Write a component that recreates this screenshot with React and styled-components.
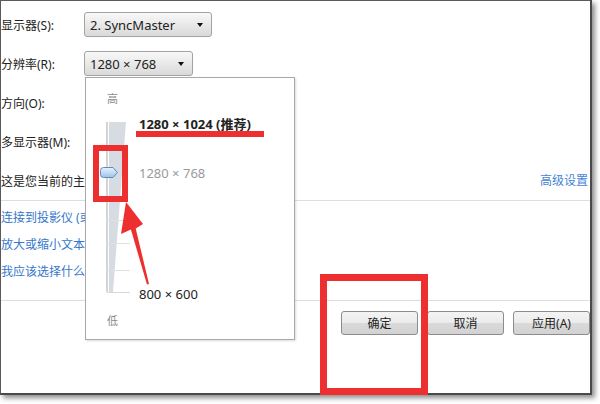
import React from 'react';
import styled, { createGlobalStyle } from 'styled-components';

const Global = createGlobalStyle`
  html, body { margin: 0; padding: 0; background: #fff; }
  body { font-family: "Noto Sans", "Noto Sans CJK SC", sans-serif; }
  * { box-sizing: border-box; }
`;

const Stage = styled.div`
  position: relative;
  width: 600px;
  height: 404px;
  overflow: hidden;
  background: #fff;
`;

const Window = styled.div`
  position: relative;
  width: 592px;
  height: 395px;
  border: 1px solid #5a5a5a;
  border-right: 2px solid #4a4a4a;
  border-bottom: 2px solid #4a4a4a;
  background: #fff;
  box-shadow: 3px 3px 5px rgba(0, 0, 0, 0.45);
  display: flex;
  flex-direction: column;
  color: #222;
`;

const Form = styled.div`
  padding-top: 4px;
  border-bottom: 1px solid #dedede;
  display: flex;
  flex-direction: column;
`;

const Row = styled.div`
  height: 39px;
  display: flex;
  align-items: center;
`;

const Label = styled.div`
  width: 83px;
  flex: none;
  font-size: 12px;
  white-space: nowrap;
  color: #222;
`;

const Note = styled.div`
  flex: 1;
  font-size: 12px;
  white-space: nowrap;
  overflow: hidden;
  color: #222;
`;

const Link = styled.a`
  display: block;
  font-size: 12px;
  line-height: 27px;
  color: #3577cc;
  white-space: nowrap;
  text-decoration: none;
`;

const RightLink = styled(Link)`
  flex: none;
  margin-right: 2px;
  line-height: 16px;
  color: #4385d6;
`;

const Dropdown = styled.div`
  width: ${(p) => p.$w}px;
  height: 25px;
  display: flex;
  align-items: center;
  justify-content: space-between;
  padding: 0 8px 0 5px;
  border: 1px solid #a3a3a3;
  border-radius: 3px;
  background: linear-gradient(#f8f8f8, #e9e9e9 50%, #d9d9d9);
  font-size: 13px;
  color: #222;
  &::after {
    content: "";
    width: 0;
    height: 0;
    border-left: 3.5px solid transparent;
    border-right: 3.5px solid transparent;
    border-top: 4px solid #111;
  }
`;

const Links = styled.div`
  padding: 3px 0 15px 0;
  border-bottom: 1px solid #dedede;
  overflow: hidden;
`;

const ButtonBar = styled.div`
  padding-top: 10px;
  display: flex;
  justify-content: flex-end;
  gap: 9px;
`;

const Button = styled.button`
  width: 77px;
  height: 24px;
  border: 1px solid #8c8c8c;
  border-radius: 3px;
  background: linear-gradient(#f4f4f4, #ebebeb 50%, #dadada 51%, #d2d2d2);
  font-family: "Noto Sans", "Noto Sans CJK SC", sans-serif;
  font-size: 12px;
  color: #222;
  padding: 0;
`;

const Popup = styled.div`
  position: absolute;
  left: 84px;
  top: 76px;
  width: 210px;
  height: 263px;
  border: 1px solid #a8a8a8;
  background: #fff;
  box-shadow: 1px 1px 2px rgba(0, 0, 0, 0.15);
  padding: 14px 0 0 13px;
  display: flex;
`;

const SliderCol = styled.div`
  width: 40px;
  flex: none;
  display: flex;
  flex-direction: column;
`;

const EndLabel = styled.div`
  padding-left: 8px;
  margin-top: ${(p) => p.$mt || 0}px;
  font-size: 11px;
  line-height: 14px;
  color: #8a8a8a;
`;

const Track = styled.svg`
  display: block;
  margin-top: 10px;
`;

const LabelCol = styled.div`
  display: flex;
  flex-direction: column;
`;

const Res = styled.div`
  margin-top: ${(p) => p.$mt}px;
  font-size: 13px;
  line-height: 16px;
  white-space: nowrap;
  font-weight: ${(p) => (p.$bold ? 700 : 400)};
  color: ${(p) => p.$color || '#222'};
`;

const Marks = styled.svg`
  position: absolute;
  left: 0;
  top: 0;
  pointer-events: none;
`;

function Slider() {
  return (
    <Track width="40" height="180" viewBox="0 0 40 180">
      <defs>
        <linearGradient id="thumb" x1="0" y1="0" x2="0" y2="1">
          <stop offset="0" stopColor="#e6f1fc" />
          <stop offset="0.5" stopColor="#c4dcf4" />
          <stop offset="1" stopColor="#9cc2e8" />
        </linearGradient>
      </defs>
      <polygon points="10,6 27,6 14,176 10,176" fill="#d7dce2" />
      <line x1="8" y1="6" x2="8" y2="176" stroke="#a9a9a9" strokeWidth="1" />
      <line x1="8" y1="104.5" x2="31" y2="104.5" stroke="#e0e0e0" />
      <line x1="8" y1="127.5" x2="31" y2="127.5" stroke="#e0e0e0" />
      <line x1="8" y1="154.5" x2="31" y2="154.5" stroke="#e0e0e0" />
      <line x1="8" y1="176.5" x2="31" y2="176.5" stroke="#d8d8d8" />
      <path
        d="M4.5,51.5 H14 L18.5,56.5 L14,61.5 H4.5 Q1.5,61.5 1.5,58.5 V54.5 Q1.5,51.5 4.5,51.5 Z"
        fill="url(#thumb)"
        stroke="#5d8cbf"
        strokeWidth="1"
      />
    </Track>
  );
}

export default function App() {
  return (
    <Stage>
      <Global />
      <Window>
        <Form>
          <Row>
            <Label>显示器(S):</Label>
            <Dropdown $w={128}>2. SyncMaster</Dropdown>
          </Row>
          <Row>
            <Label>分辨率(R):</Label>
            <Dropdown $w={109}>1280 × 768</Dropdown>
          </Row>
          <Row>
            <Label>方向(O):</Label>
          </Row>
          <Row>
            <Label>多显示器(M):</Label>
          </Row>
          <Row>
            <Note>这是您当前的主显示器。</Note>
            <RightLink>高级设置</RightLink>
          </Row>
        </Form>
        <Links>
          <Link>连接到投影仪 (或按 Windows 徽标键 + P)</Link>
          <Link>放大或缩小文本和其他项目</Link>
          <Link>我应该选择什么显示器设置?</Link>
        </Links>
        <ButtonBar>
          <Button>确定</Button>
          <Button>取消</Button>
          <Button>应用(A)</Button>
        </ButtonBar>
        <Popup>
          <SliderCol>
            <EndLabel>高</EndLabel>
            <Slider />
            <EndLabel $mt={18}>低</EndLabel>
          </SliderCol>
          <LabelCol>
            <Res $mt={24} $bold>1280 × 1024 (推荐)</Res>
            <Res $mt={33} $color="#9a9a9a">1280 × 768</Res>
            <Res $mt={105}>800 × 600</Res>
          </LabelCol>
        </Popup>
      </Window>
      <Marks width="600" height="404" viewBox="0 0 600 404">
        <rect x="136" y="131" width="128" height="6" fill="#ee2f2f" />
        <rect x="96" y="148" width="29" height="51" fill="none" stroke="#ee2f2f" strokeWidth="6" />
        <rect x="323.5" y="277.5" width="101" height="114" fill="none" stroke="#ee2f2f" strokeWidth="7" />
        <polygon
          points="126,202 143,224 135.7,228.4 149,284 147,284.5 130.9,229.6 121,234"
          fill="#ee2f2f"
        />
      </Marks>
    </Stage>
  );
}
